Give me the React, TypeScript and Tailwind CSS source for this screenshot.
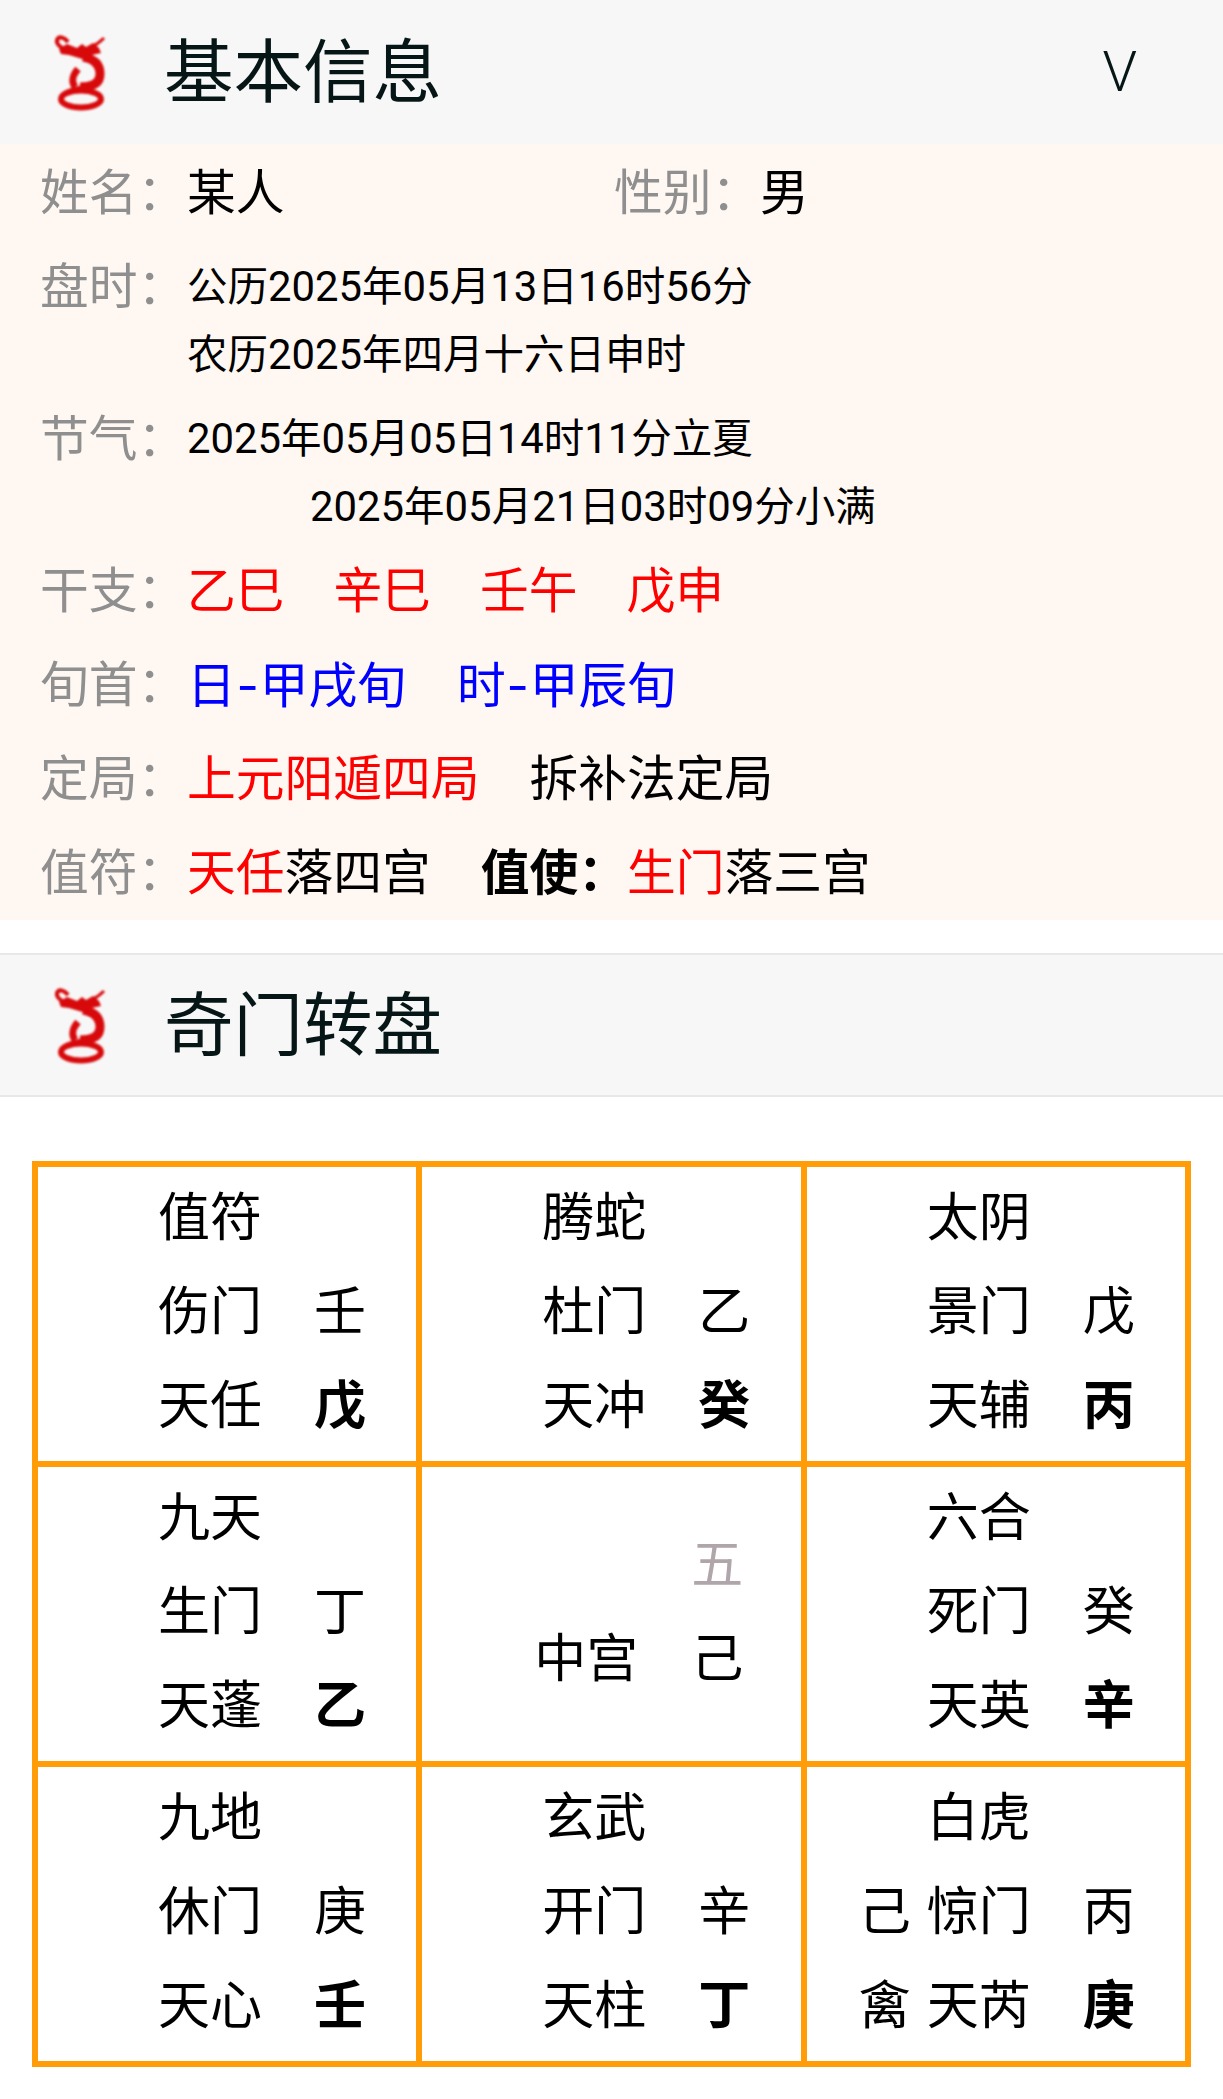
import React from "react";

const font = { fontFamily: 'Roboto, "Noto Sans CJK SC", sans-serif' };

function DragonLogo() {
  return (
    <svg viewBox="0 0 70 90" className="h-[90px] w-[70px] shrink-0 blur-[1px]" fill="none">
      <path d="M24 22C18 23 11 18 12 13C14 8 20 11 23 15" stroke="#d8090b" strokeWidth="4" />
      <path d="M59 11C55 15 51 18 46 20" stroke="#d8090b" strokeWidth="3" />
      <path d="M14 22L22 17L32 21L37 17L41 20L48 16L54 21L56 26L42 29L52 36L34 31L24 28L16 27Z" fill="#d8090b" />
      <path d="M38 30C50 32 55 38 55 47C55 56 48 60 35 60" stroke="#d8090b" strokeWidth="9" />
      <path d="M33 42C27 49 26 54 30 60" stroke="#d8090b" strokeWidth="7" />
      <ellipse cx="36" cy="72" rx="20" ry="8.5" stroke="#d8090b" strokeWidth="6" />
      <path d="M18 68C26 62 36 60 48 61" stroke="#d8090b" strokeWidth="5" />
    </svg>
  );
}

function SectionHeader({ title, arrow, bordered }: { title: string; arrow?: boolean; bordered?: boolean }) {
  return (
    <div
      className={`flex h-[144px] items-center bg-[#f7f7f7] pl-[45px] pr-[86px] ${
        bordered ? "border-y-2 border-[#e8e8e8]" : ""
      }`}
    >
      <DragonLogo />
      <h2 className="ml-[49px] flex-1 pt-[3px] text-[69.5px] leading-none font-normal text-[#061616]">{title}</h2>
      {arrow && <span className="text-[56px] leading-none font-light text-[#061616]">V</span>}
    </div>
  );
}

function InfoRow({ label, children }: { label: string; children: React.ReactNode }) {
  return (
    <div className="flex h-[94px] items-center pl-[40px] text-[48.75px] leading-[94px] whitespace-nowrap">
      <span className="w-[147px] shrink-0 text-[#8f8f8f]">{label}</span>
      {children}
    </div>
  );
}

function DateRow({ label, children }: { label: string; children: React.ReactNode }) {
  return (
    <div className="flex h-[152px] pl-[40px]">
      <span className="w-[147px] shrink-0 text-[48.75px] leading-[94px] text-[#8f8f8f]">{label}</span>
      <div className="pt-[12px] text-[40.5px] leading-[68px] text-black">{children}</div>
    </div>
  );
}

// digits sit a touch larger than the han text in the date lines
function DateText({ text }: { text: string }) {
  return (
    <>
      {text.split(/(\d+)/).map((part, i) =>
        i % 2 === 1 ? (
          <span key={i} className="text-[41.85px]">
            {part}
          </span>
        ) : (
          part
        ),
      )}
    </>
  );
}

function Dash() {
  return <span className="inline-block w-[24px] text-center font-['Inter']">-</span>;
}

interface Cell {
  top: string;
  door: string;
  star: string;
  a: string;
  b: string;
  left1?: string;
  left2?: string;
}

const cells: (Cell | null)[] = [
  { top: "值符", door: "伤门", star: "天任", a: "壬", b: "戊" },
  { top: "腾蛇", door: "杜门", star: "天冲", a: "乙", b: "癸" },
  { top: "太阴", door: "景门", star: "天辅", a: "戊", b: "丙" },
  { top: "九天", door: "生门", star: "天蓬", a: "丁", b: "乙" },
  null,
  { top: "六合", door: "死门", star: "天英", a: "癸", b: "辛" },
  { top: "九地", door: "休门", star: "天心", a: "庚", b: "壬" },
  { top: "玄武", door: "开门", star: "天柱", a: "辛", b: "丁" },
  { top: "白虎", door: "惊门", star: "天芮", a: "丙", b: "庚", left1: "己", left2: "禽" },
];

function PalaceCell({ cell }: { cell: Cell }) {
  return (
    <div className="grid grid-cols-[120px_156px_52px] auto-rows-[94px] items-center bg-white pt-[5px] text-[52px] leading-[94px] text-black">
      <span />
      <span>{cell.top}</span>
      <span />
      <span className="pr-[16px] text-right">{cell.left1}</span>
      <span>{cell.door}</span>
      <span>{cell.a}</span>
      <span className="pr-[16px] text-right">{cell.left2}</span>
      <span>{cell.star}</span>
      <span className="font-bold">{cell.b}</span>
    </div>
  );
}

function CenterCell() {
  return (
    <div className="grid grid-cols-[112px_157px_52px] auto-rows-[94px] content-center items-center bg-white pb-[2px] text-[52px] leading-[94px] text-black">
      <span />
      <span />
      <span className="text-[#b0a5aa]">五</span>
      <span />
      <span>中宫</span>
      <span>己</span>
    </div>
  );
}

export default function App() {
  return (
    <div className="min-h-[2099px] w-[1223px] bg-white" style={font}>
      <SectionHeader title="基本信息" arrow />

      <div className="h-[776px] bg-[#fff8f2] pt-[3px] text-black">
        <div className="flex h-[94px] items-center pl-[40px] text-[48.75px] leading-[94px] whitespace-nowrap">
          <span className="w-[147px] shrink-0 text-[#8f8f8f]">姓名：</span>
          <span className="w-[427px] shrink-0">某人</span>
          <span className="w-[146px] shrink-0 text-[#8f8f8f]">性别：</span>
          <span>男</span>
        </div>
        <DateRow label="盘时：">
          <div>
            <DateText text="公历2025年05月13日16时56分" />
          </div>
          <div>
            <DateText text="农历2025年四月十六日申时" />
          </div>
        </DateRow>
        <DateRow label="节气：">
          <div>
            <DateText text="2025年05月05日14时11分立夏" />
          </div>
          <div className="pl-[123px]">
            <DateText text="2025年05月21日03时09分小满" />
          </div>
        </DateRow>
        <InfoRow label="干支：">
          <div className="flex gap-[49px] text-[#ff0000]">
            <span>乙巳</span>
            <span>辛巳</span>
            <span>壬午</span>
            <span>戊申</span>
          </div>
        </InfoRow>
        <InfoRow label="旬首：">
          <div className="flex gap-[51px] text-[#0000ff]">
            <span>
              日<Dash />甲戌旬
            </span>
            <span>
              时<Dash />甲辰旬
            </span>
          </div>
        </InfoRow>
        <InfoRow label="定局：">
          <div className="flex gap-[50px]">
            <span className="text-[#ff0000]">上元阳遁四局</span>
            <span>拆补法定局</span>
          </div>
        </InfoRow>
        <InfoRow label="值符：">
          <span>
            <span className="text-[#ff0000]">天任</span>落四宫
          </span>
          <span className="ml-[50px] font-bold">值使：</span>
          <span>
            <span className="text-[#ff0000]">生门</span>落三宫
          </span>
        </InfoRow>
      </div>

      <div className="h-[33px] bg-white" />
      <SectionHeader title="奇门转盘" bordered />

      <div className="pt-[64px] pl-[32px]">
        <div className="grid w-[1159px] grid-cols-3 grid-rows-[294px_294px_294px] gap-[6px] border-[6px] border-[#ff9c08] bg-[#ff9c08]">
          {cells.map((cell, i) => (cell ? <PalaceCell key={i} cell={cell} /> : <CenterCell key={i} />))}
        </div>
      </div>
    </div>
  );
}
